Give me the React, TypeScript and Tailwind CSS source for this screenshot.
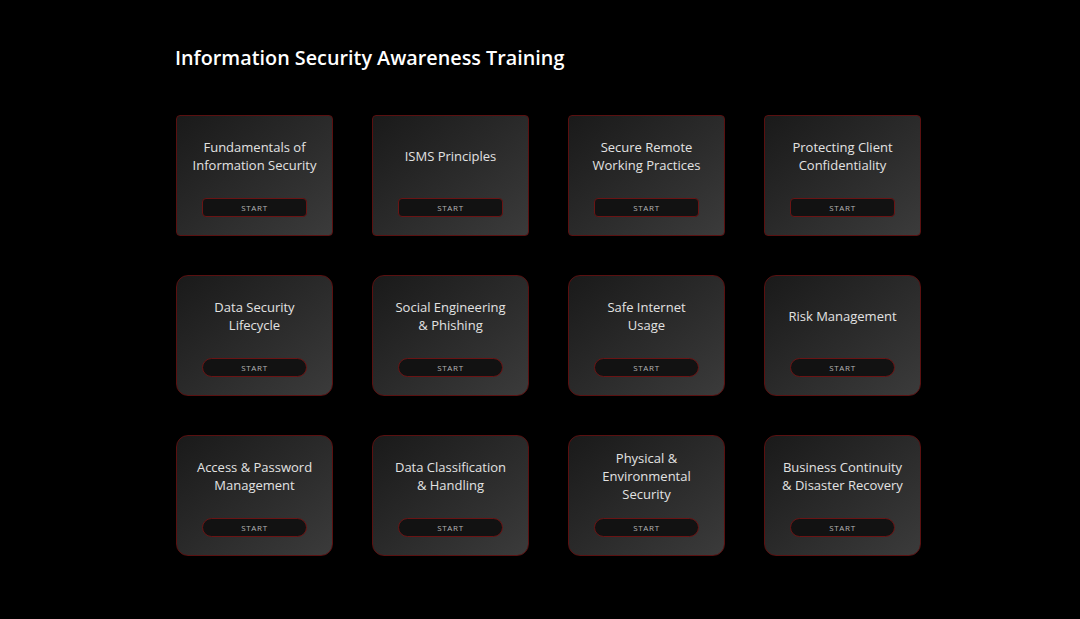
const modules = [
  { title: ["Fundamentals of", "Information Security"], round: false },
  { title: ["ISMS Principles"], round: false },
  { title: ["Secure Remote", "Working Practices"], round: false },
  { title: ["Protecting Client", "Confidentiality"], round: false },
  { title: ["Data Security", "Lifecycle"], round: true },
  { title: ["Social Engineering", "& Phishing"], round: true },
  { title: ["Safe Internet", "Usage"], round: true },
  { title: ["Risk Management"], round: true },
  { title: ["Access & Password", "Management"], round: true },
  { title: ["Data Classification", "& Handling"], round: true },
  { title: ["Physical &", "Environmental", "Security"], round: true },
  { title: ["Business Continuity", "& Disaster Recovery"], round: true },
];

function ModuleCard({ title, round }: { title: string[]; round: boolean }) {
  return (
    <div
      className={
        round
          ? "flex h-[121px] w-[157px] flex-col items-center rounded-xl border border-[#5a1010] bg-gradient-to-br from-[#1a1a1a] to-[#3b3b3b]"
          : "flex h-[121px] w-[157px] flex-col items-center rounded-[4px] border border-[#5a1010] bg-gradient-to-br from-[#1a1a1a] to-[#3b3b3b]"
      }
    >
      <div className="mt-[7px] flex h-[66px] flex-col items-center justify-center text-center text-[13px] font-normal leading-[18px] text-[#e2e2e2]">
        {title.map((line) => (
          <span key={line} className="whitespace-nowrap">
            {line}
          </span>
        ))}
      </div>
      <button
        className={
          round
            ? "mt-[9px] h-[19px] w-[105px] rounded-full border border-[#6a1414] bg-[#121212] text-[8px] tracking-[0.08em] text-[#b5b5b5]"
            : "mt-[9px] h-[19px] w-[105px] rounded-[4px] border border-[#6a1414] bg-[#121212] text-[8px] tracking-[0.08em] text-[#b5b5b5]"
        }
      >
        START
      </button>
    </div>
  );
}

export default function App() {
  return (
    <main
      className="min-h-[619px] w-full bg-black pl-[175px] pt-[44px]"
      style={{ fontFamily: "'Open Sans', 'Noto Sans', sans-serif" }}
    >
      <h1 className="text-[19.8px] font-semibold leading-[28px] text-white">
        Information Security Awareness Training
      </h1>

      <div className="mt-[43px] grid w-max grid-cols-[repeat(4,157px)] gap-x-[39px] gap-y-[39px] pl-px">
        {modules.map((m) => (
          <ModuleCard key={m.title.join(" ")} title={m.title} round={m.round} />
        ))}
      </div>
    </main>
  );
}
